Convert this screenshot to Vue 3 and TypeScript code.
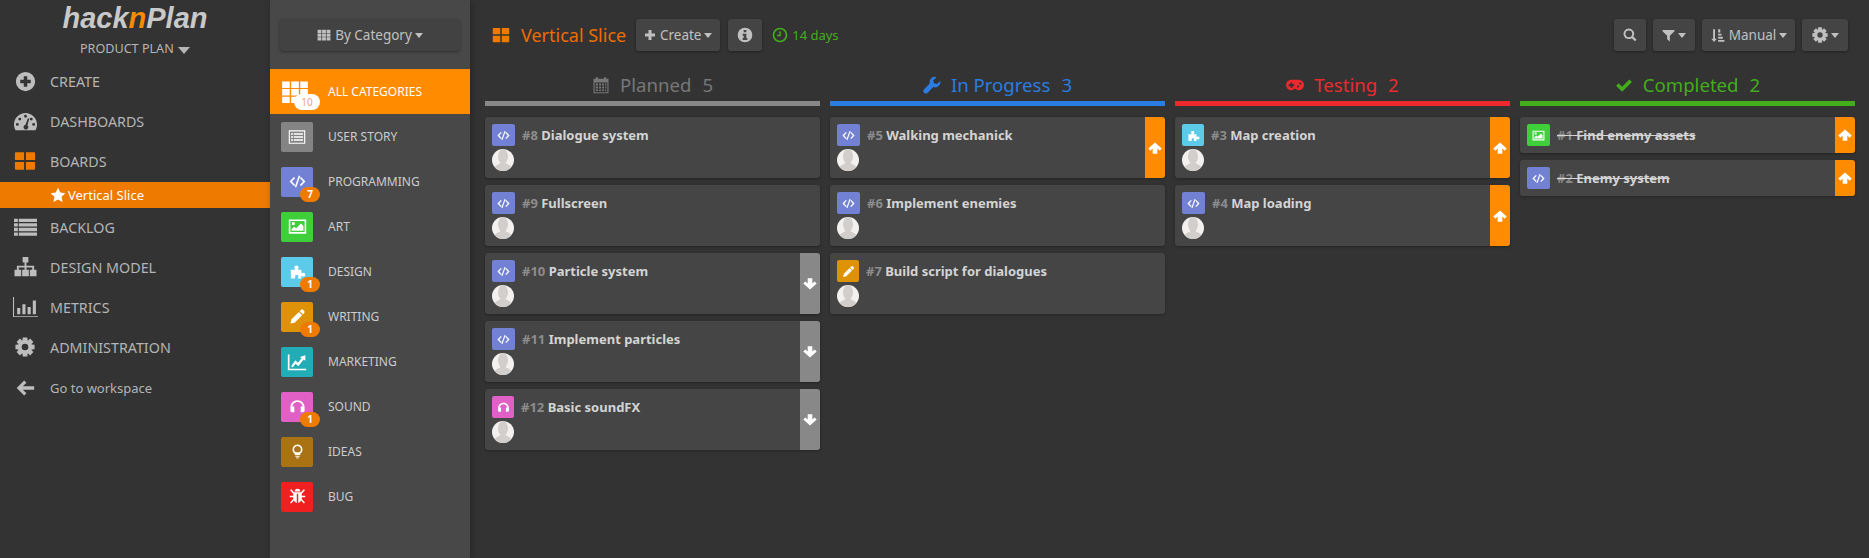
<template>
  <div class="app">
    <aside class="sidebar">
      <div class="logo"><span>hack</span><span class="logo-n">n</span><span>Plan</span></div>
      <div class="plan-select">PRODUCT PLAN <span class="caret caret-big"></span></div>
      <nav class="nav">
        <template v-for="item in navItems" :key="item.label">
          <a class="nav-item" :class="{ 'nav-lower': item.lower }">
            <span class="nav-icon" :class="{ 'nav-icon-orange': item.orange }">
              <svg viewBox="0 0 24 24" :width="item.w" :height="item.h" preserveAspectRatio="none"><path fill-rule="evenodd" :d="icons[item.icon]" /></svg>
            </span>
            {{ item.label }}
          </a>
          <a v-if="item.sub" class="nav-sub">
            <svg viewBox="0 0 24 24" width="16" height="16"><path :d="icons.star" /></svg>
            {{ item.sub }}
          </a>
        </template>
      </nav>
    </aside>

    <aside class="categories">
      <div class="cat-top">
        <button class="btn btn-wide">
          <svg viewBox="0 0 24 24" width="14" height="14"><path :d="icons.th" /></svg>
          By Category <span class="caret"></span>
        </button>
      </div>
      <a class="cat-row cat-active">
        <span class="cat-all">
          <svg viewBox="0 0 24 24" width="28" height="28"><path :d="icons.th" /></svg>
          <span class="cat-badge cat-badge-white">10</span>
        </span>
        ALL CATEGORIES
      </a>
      <a v-for="cat in categories" :key="cat.label" class="cat-row">
        <span class="cat-icon" :style="{ background: cat.color }">
          <svg viewBox="0 0 24 24" :width="cat.size || 17" :height="cat.size || 17"><path fill-rule="evenodd" :d="icons[cat.icon]" /></svg>
          <span v-if="cat.count" class="cat-badge">{{ cat.count }}</span>
        </span>
        {{ cat.label }}
      </a>
    </aside>

    <main class="main">
      <header class="toolbar">
        <svg class="title-icon" viewBox="0 0 24 24" width="18" height="18"><path :d="icons.boards" /></svg>
        <h1 class="title">Vertical Slice</h1>
        <button class="btn btn-create">
          <svg viewBox="0 0 24 24" width="12" height="12"><path :d="icons.plus" /></svg>
          Create <span class="caret"></span>
        </button>
        <button class="btn btn-info">
          <svg viewBox="0 0 24 24" width="16" height="16"><path fill-rule="evenodd" :d="icons.info" /></svg>
        </button>
        <span class="days">
          <svg viewBox="0 0 24 24" width="16" height="16"><path fill-rule="evenodd" :d="icons.clock" /></svg>
          14 days
        </span>
        <div class="toolbar-right">
          <button class="btn btn-search">
            <svg viewBox="0 0 24 24" width="14" height="14"><path fill-rule="evenodd" :d="icons.search" /></svg>
          </button>
          <button class="btn btn-filter">
            <svg viewBox="0 0 24 24" width="13" height="13"><path :d="icons.filter" /></svg>
            <span class="caret"></span>
          </button>
          <button class="btn btn-manual">
            <svg viewBox="0 0 24 24" width="15" height="15"><path :d="icons.sort" /></svg>
            Manual <span class="caret"></span>
          </button>
          <button class="btn btn-gear">
            <svg viewBox="0 0 24 24" width="16" height="16"><path fill-rule="evenodd" :d="icons.gear" /></svg>
            <span class="caret"></span>
          </button>
        </div>
      </header>

      <section class="board">
        <div v-for="col in columns" :key="col.title" class="column">
          <div class="col-head" :style="{ color: col.color, borderColor: col.bar }">
            <svg viewBox="0 0 24 24" width="18" height="18"><path fill-rule="evenodd" :d="icons[col.icon]" /></svg>
            <span class="col-title">{{ col.title }}</span>
            <span class="col-count">{{ col.tasks.length }}</span>
          </div>
          <article
            v-for="task in col.tasks"
            :key="task.id"
            class="card"
            :class="{ 'card-done': col.done }"
          >
            <div class="card-body">
              <div class="card-line">
                <span class="task-icon" :style="{ background: catColor(task.icon), width: task.iconW + 'px' }">
                  <svg viewBox="0 0 24 24" width="13" height="13"><path fill-rule="evenodd" :d="icons[task.icon]" /></svg>
                </span>
                <span class="task-name" :class="{ 'task-strike': col.done }"><span class="task-id">#{{ task.id }}</span> {{ task.name }}</span>
              </div>
              <svg v-if="!col.done" class="avatar" viewBox="0 0 22 22" width="22" height="22">
                <circle cx="11" cy="11" r="11" fill="#f3f1f0" />
                <ellipse cx="11" cy="7.500" rx="5" ry="7.500" fill="#d2cecb" />
                <path fill="#d2cecb" d="M2.500 18c2-2.500 5-3 6-4h5c1 1 4 1.500 6 4a11 11 0 0 1-17 0z" />
              </svg>
            </div>
            <div v-if="task.move" class="card-move" :class="`move-${task.move}`">
              <svg viewBox="0 0 24 24" width="14" height="14"><path :d="task.move === 'up' ? icons.arrowUp : icons.arrowDown" /></svg>
            </div>
          </article>
        </div>
      </section>
    </main>
  </div>
</template>

<script setup lang="ts">
const buildGear = () => {
  // 8 teeth round a ring, the hole is cut with evenodd
  const pts: string[] = []
  for (let i = 0; i < 8; i++) {
    const a = (i * Math.PI) / 4
    for (const [r, o] of [[8.6, -0.36], [11.8, -0.24], [11.8, 0.24], [8.6, 0.36]]) {
      const x = 12 + r * Math.sin(a + o)
      const y = 12 - r * Math.cos(a + o)
      pts.push(`${x.toFixed(2)} ${y.toFixed(2)}`)
    }
  }
  return `M${pts.join('L')}zM12 8a4 4 0 1 0 0 8 4 4 0 0 0 0-8z`
}

const icons: Record<string, string> = {
  gear: buildGear(),
  create: 'M12 1a11 11 0 1 0 0 22 11 11 0 0 0 0-22zM10 6h4v4h4v4h-4v4h-4v-4H6v-4h4z',
  dashboard: 'M12 3C5.400 3 0 8.400 0 15c0 2.200.6 4.300 1.700 6h20.600c1.100-1.700 1.700-3.800 1.700-6 0-6.600-5.400-12-12-12zM12 5a1.500 1.500 0 1 1 0 3 1.500 1.500 0 0 1 0-3zM6 8a1.500 1.500 0 1 1 0 3 1.500 1.500 0 0 1 0-3zM18 8a1.500 1.500 0 1 1 0 3 1.500 1.500 0 0 1 0-3zM3.500 13.500a1.500 1.500 0 1 1 0 3 1.500 1.500 0 0 1 0-3zM20.500 13.500a1.500 1.500 0 1 1 0 3 1.500 1.500 0 0 1 0-3zM14.500 8.500l1.500.5-2 7a2.500 2.500 0 1 1-2-.5z',
  boards: 'M1 3.500A1 1 0 0 1 2 2.500h9v8.500H1zM13 2.500h9a1 1 0 0 1 1 1V11H13zM1 13h10v8.500H2a1 1 0 0 1-1-1zM13 13h10v7.500a1 1 0 0 1-1 1h-9z',
  star: 'M12 1l3.400 7.200 7.600 1-5.600 5.400 1.400 7.800L12 18.600l-6.800 3.800 1.400-7.800L1 9.200l7.600-1z',
  backlog: 'M0 2h4v4H0zM5 2h19v4H5zM0 7.500h4v4H0zM5 7.500h19v4H5zM0 13h4v4H0zM5 13h19v4H5zM0 18.500h4v4H0zM5 18.500h19v4H5z',
  sitemap: 'M9 1h6v6h-2v3.500h8V15h2.500v7h-7v-7H19v-2.500h-6V15h2.500v7h-7v-7H11v-2.500H5V15h2.500v7h-7v-7H3v-4.500h8V7H9z',
  metrics: 'M0 1h1v21h24v1H0zM4 13h3v7H4zM9 9h3v11H9zM14 12h3v8h-3zM19 5h3v15h-3z',
  arrowLeft: 'M11 3L2 12l9 9 2.700-2.700L9.400 14H23v-4H9.400l4.300-4.300z',
  th: 'M1 3h6.500v5.500H1zM8.700 3h6.600v5.500H8.700zM16.500 3H23v5.500h-6.500zM1 9.500h6.500V15H1zM8.700 9.500h6.600V15H8.700zM16.500 9.500H23V15h-6.500zM1 16h6.500v5.500H1zM8.700 16h6.600v5.500H8.700zM16.500 16H23v5.500h-6.500z',
  listAlt: 'M1 3h22v18H1zM2.500 4.500v15h19v-15zM4 7h3v2H4zM8 7h12v2H8zM4 11h3v2H4zM8 11h12v2H8zM4 15h3v2H4zM8 15h12v2H8z',
  code: 'M7 5.500L.8 12 7 18.500l1.700-1.600L4.100 12l4.600-4.900zM17 5.500l-1.700 1.600 4.600 4.900-4.600 4.900 1.700 1.600 6.200-6.500zM13.800 3.500l2.100.6L10.200 20.500l-2.100-.6z',
  picture: 'M1 3h22v18H1zM3 5v14h18V5zM5 6.500h3.500V10H5zM4.500 17.500v-2.300l3.500-3 2.300 2 6-6 3.200 3.300v6z',
  puzzle: 'M2.500 9.500h6c.5-1-1-1.500-1-3.500 0-1.500 1.500-2.500 3-2.500s3 1 3 2.500c0 2-1.500 2.500-1 3.500h5v5c1 .4 1.500-.8 3-.8s2.500 1 2.500 2.800-1 2.800-2.500 2.800-2-1.200-3-.8V22h-5c-.6-1 .8-1.500.8-3s-1.300-2-2.400-2-2.400.5-2.400 2 1.400 2-.8 3h-5z',
  pencil: 'M17 2.500a2 2 0 0 1 2.800 0l1.700 1.700a2 2 0 0 1 0 2.800L19.700 9l-4.500-4.500zM14 5.700l4.500 4.500L8 20.700 2 22l1.500-6z',
  chart: 'M1 3h2v17h20v2H1zM5 17l5-7 3.200 3 4.300-5.500-2-1.500L22 4v6.500L20 9l-6.500 8-3.200-3-3.500 4.500z',
  headphones: 'M12 3C6 3 2 7.500 2 13v5a2 2 0 0 0 2 2h3.500v-8H4.700v1.200C4.700 9 8 5.800 12 5.800s7.300 3.200 7.300 7.400V12h-2.800v8H20a2 2 0 0 0 2-2v-5c0-5.500-4-10-10-10z',
  bulb: 'M12 2a7 7 0 0 0-4 12.700V17h8v-2.300A7 7 0 0 0 12 2zM12 4.200a4.800 4.800 0 0 1 2.400 9H9.600a4.800 4.800 0 0 1 2.400-9zM9 18h6v1.500H9zM9.500 20.500h5L13 22h-2z',
  bug: 'M8 5a4 4 0 0 1 8 0zM1.500 3L3 1.500 7 6h10l4-4.500L22.500 3 18 8v3h5v2h-5v2.500l4.500 5-1.500 1.500-3.800-4.200A6 6 0 0 1 13 21V8h-2v13a6 6 0 0 1-4.200-3.200L3 22l-1.500-1.500 4.500-5V13H1v-2h5V8z',
  arrowUp: 'M12 2.500L23.500 13 20 16.500l-4-3.500V22H8v-9l-4 3.500L.5 13z',
  arrowDown: 'M12 21.500L23.500 11 20 7.500 16 11V2H8v9L4 7.500.5 11z',
  calendar: 'M2 3.500h3V1.500h3v2h8v-2h3v2h3V23H2zM3.500 8.500v13h17v-13zM5 10h3v2.500H5zM9.500 10h2.500v2.500H9.500zM13.500 10H16v2.500h-2.500zM17.500 10H19v2.500h-1.500zM5 14h3v2.500H5zM9.500 14h2.500v2.500H9.500zM13.500 14H16v2.500h-2.500zM17.500 14H19v2.500h-1.500zM5 18h3v2H5zM9.500 18h2.500v2H9.500zM13.500 18H16v2h-2.500zM17.500 18H19v2h-1.500z',
  wrench: 'M23 6.500l-4.500 4.300-4-1-1-3.800L18 1.500A7 7 0 0 0 9 10L1.500 17.500a3.300 3.300 0 0 0 4.700 4.700L13.700 14.700A7 7 0 0 0 23 6.500z',
  gamepad: 'M7 5h10a7 7 0 0 1 0 14c-2 0-3.200-1-4-2h-2c-.8 1-2 2-4 2A7 7 0 0 1 7 5zM6 8.500v2.500H3.500v2.500H6V16h2.500v-2.500H11V11H8.500V8.500zM16 12.500a1.500 1.500 0 1 0 0 3 1.500 1.500 0 0 0 0-3zM19 8.500a1.500 1.500 0 1 0 0 3 1.500 1.500 0 0 0 0-3z',
  check: 'M1.500 13l3.300-3.300 4.700 4.700L19.200 4.700 22.500 8 9.500 21z',
  plus: 'M9 2h6v7h7v6h-7v7H9v-7H2V9h7z',
  info: 'M12 1a11 11 0 1 0 0 22 11 11 0 0 0 0-22zM10 4.500h4v3.500h-4zM8.500 10H14v6.500h1.500v3h-7v-3H10V13H8.500z',
  clock: 'M12 1a11 11 0 1 0 0 22 11 11 0 0 0 0-22zM12 3.500a8.500 8.500 0 1 1 0 17 8.500 8.500 0 0 1 0-17zM11 6.500h2.200V14H7.500v-2.200H11z',
  search: 'M10 1a9 9 0 1 0 5.100 16.400l5.400 5.400 2.700-2.700-5.400-5.400A9 9 0 0 0 10 1zm0 3.200a5.800 5.800 0 1 1 0 11.600 5.800 5.800 0 0 1 0-11.600z',
  filter: 'M1 2h22v2l-8.500 8.500V23l-5-4v-6.500L1 4z',
  sort: 'M5 2h3v15h3l-4.500 5.500L2 17h3zM13 2h3.500v5H13zM13 9h5.500v3H13zM13 14h7.500v3H13zM13 19h10v3H13z',
}

interface NavItem {
  label: string
  icon: string
  w: number
  h: number
  orange?: boolean
  lower?: boolean
  sub?: string
}

const navItems: NavItem[] = [
  { label: 'CREATE', icon: 'create', w: 21, h: 21 },
  { label: 'DASHBOARDS', icon: 'dashboard', w: 23, h: 23 },
  { label: 'BOARDS', icon: 'boards', w: 22, h: 22, orange: true, sub: 'Vertical Slice' },
  { label: 'BACKLOG', icon: 'backlog', w: 23, h: 20 },
  { label: 'DESIGN MODEL', icon: 'sitemap', w: 23, h: 22 },
  { label: 'METRICS', icon: 'metrics', w: 25, h: 22 },
  { label: 'ADMINISTRATION', icon: 'gear', w: 20, h: 20 },
  { label: 'Go to workspace', icon: 'arrowLeft', w: 20, h: 20, lower: true },
]

const categories = [
  { label: 'USER STORY', icon: 'listAlt', color: '#848484', size: 18 },
  { label: 'PROGRAMMING', icon: 'code', color: '#7281d4', count: 7 },
  { label: 'ART', icon: 'picture', color: '#3fcf3a', size: 19 },
  { label: 'DESIGN', icon: 'puzzle', color: '#5ccbea', count: 1 },
  { label: 'WRITING', icon: 'pencil', color: '#dd9208', count: 1 },
  { label: 'MARKETING', icon: 'chart', color: '#22adb6', size: 20 },
  { label: 'SOUND', icon: 'headphones', color: '#e060c6', count: 1 },
  { label: 'IDEAS', icon: 'bulb', color: '#a97213' },
  { label: 'BUG', icon: 'bug', color: '#f01f20' },
]

const catColor = (icon: string) => categories.find((c) => c.icon === icon)?.color || '#7281d4'

const columns = [
  {
    title: 'Planned', icon: 'calendar', color: '#777777', bar: '#888888', done: false, tasks: [
      { id: 8, name: 'Dialogue system', icon: 'code', iconW: 23 },
      { id: 9, name: 'Fullscreen', icon: 'code', iconW: 23 },
      { id: 10, name: 'Particle system', icon: 'code', iconW: 23, move: 'down' },
      { id: 11, name: 'Implement particles', icon: 'code', iconW: 23, move: 'down' },
      { id: 12, name: 'Basic soundFX', icon: 'headphones', iconW: 22, move: 'down' },
    ],
  },
  {
    title: 'In Progress', icon: 'wrench', color: '#2a7de1', bar: '#2a7de1', done: false, tasks: [
      { id: 5, name: 'Walking mechanick', icon: 'code', iconW: 23, move: 'up' },
      { id: 6, name: 'Implement enemies', icon: 'code', iconW: 23 },
      { id: 7, name: 'Build script for dialogues', icon: 'pencil', iconW: 22 },
    ],
  },
  {
    title: 'Testing', icon: 'gamepad', color: '#ec2a2e', bar: '#ec2a2e', done: false, tasks: [
      { id: 3, name: 'Map creation', icon: 'puzzle', iconW: 22, move: 'up' },
      { id: 4, name: 'Map loading', icon: 'code', iconW: 23, move: 'up' },
    ],
  },
  {
    title: 'Completed', icon: 'check', color: '#43ad1c', bar: '#43ad1c', done: true, tasks: [
      { id: 1, name: 'Find enemy assets', icon: 'picture', iconW: 23, move: 'up' },
      { id: 2, name: 'Enemy system', icon: 'code', iconW: 23, move: 'up' },
    ],
  },
]
</script>

<style>
html, body {
  margin: 0;
  background: #333333;
}
</style>

<style scoped>
.app {
  display: flex;
  height: 558px;
  overflow: hidden;
  background: #333333;
  font-family: "Noto Sans", "Open Sans", sans-serif;
  font-size: 13px;
  color: #bbbbbb;
}

svg {
  fill: currentColor;
  flex: none;
}

.sidebar {
  width: 270px;
  flex: none;
  background: #333333;
}

.logo {
  height: 36px;
  padding-top: 1px;
  text-align: center;
  font-family: "Liberation Sans", sans-serif;
  font-style: italic;
  font-weight: 700;
  font-size: 29px;
  line-height: 34px;
  color: #c9c9c9;
}

.logo-n {
  color: #f58a07;
}

.plan-select {
  height: 24px;
  line-height: 24px;
  text-align: center;
  font-size: 12.6px;
  color: #b5b5b5;
}

.nav {
  display: flex;
  flex-direction: column;
}

.nav-item {
  display: flex;
  align-items: center;
  height: 40px;
  font-size: 14.3px;
  color: #b5b5b5;
}

.nav-lower {
  padding-top: 1px;
  font-size: 13px;
}

.nav-icon {
  display: flex;
  align-items: center;
  justify-content: center;
  width: 50px;
  color: #bdbdbd;
}

.nav-icon-orange {
  color: #ef7a00;
}

.nav-sub {
  display: flex;
  align-items: center;
  gap: 2px;
  height: 26px;
  margin: 1px 0 -1px;
  padding-left: 50px;
  background: #ef7a00;
  color: #ffffff;
  font-size: 13px;
}

.categories {
  position: relative;
  width: 200px;
  flex: none;
  background: #484848;
  box-shadow: 2px 0 8px rgba(0, 0, 0, 0.25);
}

.cat-top {
  height: 69px;
  padding: 19px 10px 0;
  box-sizing: border-box;
}

.btn {
  display: inline-flex;
  align-items: center;
  justify-content: center;
  gap: 4px;
  height: 32px;
  padding: 0;
  border: none;
  border-radius: 3px;
  background: #444444;
  box-shadow: 0 1px 3px rgba(0, 0, 0, 0.35);
  color: #c0c0c0;
  font-family: inherit;
  font-size: 13.5px;
}

.btn-wide {
  width: 180px;
  background: #424242;
}

.caret {
  display: inline-block;
  width: 0;
  height: 0;
  margin-left: -1px;
  border-left: 4.5px solid transparent;
  border-right: 4.5px solid transparent;
  border-top: 5px solid currentColor;
}

.caret-big {
  margin-left: 1px;
  border-left-width: 6.5px;
  border-right-width: 6.5px;
  border-top-width: 7px;
  vertical-align: -1px;
}

.cat-row {
  display: flex;
  align-items: center;
  height: 45px;
  padding-left: 11px;
  font-size: 12px;
  color: #cccccc;
}

.cat-active {
  background: #ff8c00;
  color: #ffffff;
}

.cat-all {
  position: relative;
  display: flex;
  width: 32px;
  margin-right: 15px;
  color: #ffffff;
}

.cat-icon {
  position: relative;
  display: flex;
  align-items: center;
  justify-content: center;
  width: 32px;
  height: 30px;
  margin-right: 15px;
  border-radius: 2px;
  color: #ffffff;
}

.cat-badge {
  position: absolute;
  left: 19px;
  bottom: -5px;
  width: 20px;
  height: 15px;
  border-radius: 8px;
  background: #ef7a00;
  color: #ffffff;
  font-size: 10px;
  font-weight: 700;
  line-height: 15px;
  text-align: center;
}

.cat-badge-white {
  left: 13px;
  bottom: -4px;
  width: 26px;
  height: 16px;
  background: #ffffff;
  color: #f2a36a;
  font-weight: 400;
  line-height: 16px;
}

.main {
  flex: 1;
  min-width: 0;
}

.toolbar {
  display: flex;
  align-items: center;
  height: 70px;
  padding: 0 21px 0 22px;
  box-sizing: border-box;
}

.title-icon {
  color: #ef7a00;
}

.title {
  margin: 0 10px 0 11px;
  color: #ef6c00;
  font-size: 18px;
  font-weight: 400;
}

.btn-create {
  width: 84px;
  margin-right: 8px;
}

.btn-info {
  width: 34px;
  margin-right: 10px;
}

.days {
  display: flex;
  align-items: center;
  gap: 4px;
  color: #43ad1c;
  font-size: 13px;
}

.toolbar-right {
  display: flex;
  gap: 7px;
  margin-left: auto;
}

.btn-search {
  width: 32px;
}

.btn-filter {
  width: 42px;
}

.btn-manual {
  width: 93px;
}

.btn-gear {
  width: 46px;
}

.board {
  display: grid;
  grid-template-columns: repeat(4, 335px);
  gap: 10px;
  padding-left: 15px;
}

.column {
  display: flex;
  flex-direction: column;
  gap: 7px;
}

.col-head {
  display: flex;
  align-items: center;
  justify-content: center;
  gap: 10px;
  height: 31px;
  padding-bottom: 1px;
  margin-top: -1px;
  margin-bottom: 4px;
  border-bottom: 5px solid;
  font-size: 18.6px;
}

.col-head .col-count {
  margin-left: 1px;
}

.card {
  display: flex;
  min-height: 61px;
  border-radius: 3px;
  background: #454545;
  box-shadow: 0 1px 3px rgba(0, 0, 0, 0.3);
  overflow: hidden;
}

.card-done {
  min-height: 36px;
}

.card-body {
  flex: 1;
  display: flex;
  flex-direction: column;
  gap: 3px;
  padding: 7px;
}

.card-line {
  display: flex;
  align-items: center;
  gap: 7px;
}

.task-icon {
  display: flex;
  align-items: center;
  justify-content: center;
  height: 22px;
  border-radius: 2px;
  color: #ffffff;
}

.task-name {
  color: #d4d4d4;
  font-size: 13px;
  font-weight: 700;
}

.task-id {
  color: #8c8c8c;
}

.task-strike {
  text-decoration: line-through;
}

.avatar {
  display: block;
}

.card-move {
  display: flex;
  align-items: center;
  justify-content: center;
  width: 20px;
  color: #ffffff;
}

.move-up {
  background: #ff8c00;
}

.move-down {
  background: #888888;
}
</style>
